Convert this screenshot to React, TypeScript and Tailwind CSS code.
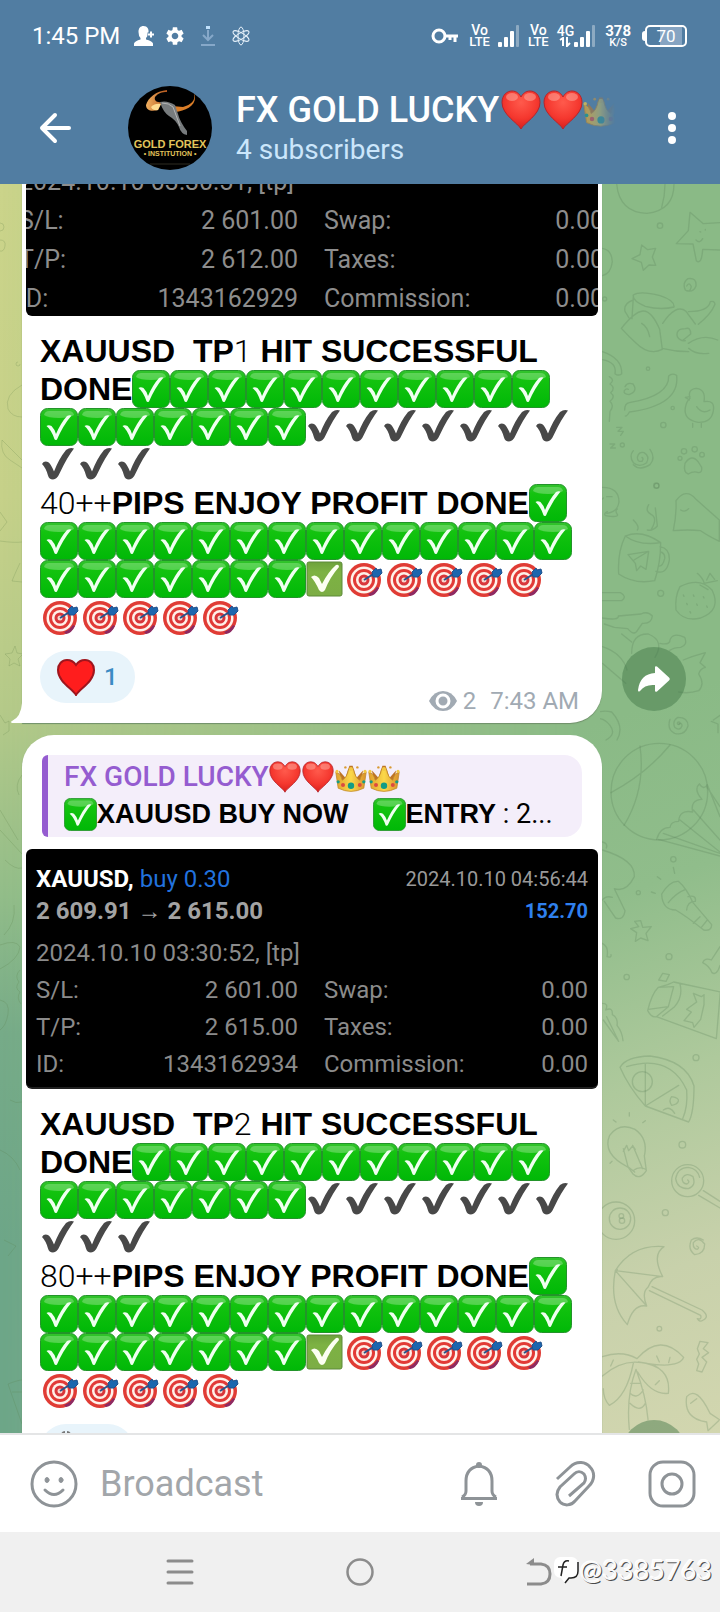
import { Fragment } from 'react';
import type { ReactNode } from 'react';
import { MdSettings } from 'react-icons/md';

const EmojiDefs = () => (
  <svg className="absolute h-0 w-0" aria-hidden="true">
    <defs>
      <linearGradient id="green" x1="0" y1="0" x2="0" y2="1">
        <stop offset="0" stopColor="#35c32f" />
        <stop offset="0.25" stopColor="#13c30f" />
        <stop offset="1" stopColor="#00b807" />
      </linearGradient>
      <linearGradient id="lime" x1="0" y1="0" x2="0" y2="1">
        <stop offset="0" stopColor="#6ea23c" />
        <stop offset="0.3" stopColor="#7db243" />
        <stop offset="1" stopColor="#7cad45" />
      </linearGradient>
      <radialGradient id="red" cx="0.5" cy="0.3" r="0.7">
        <stop offset="0" stopColor="#ff5a4c" />
        <stop offset="0.6" stopColor="#f5382f" />
        <stop offset="1" stopColor="#d81f1c" />
      </radialGradient>
      <linearGradient id="gold" x1="0" y1="0" x2="1" y2="0">
        <stop offset="0" stopColor="#e0a02c" />
        <stop offset="0.5" stopColor="#fbd84a" />
        <stop offset="1" stopColor="#d9902a" />
      </linearGradient>
      <linearGradient id="horn" x1="0" y1="0" x2="1" y2="0">
        <stop offset="0" stopColor="#f0b060" />
        <stop offset="1" stopColor="#b4561c" />
      </linearGradient>
      <symbol id="check" viewBox="0 0 38 38">
        <rect x="0.500" y="0.500" width="37" height="37" rx="7" fill="url(#green)" stroke="#23942a" />
        <path d="M4 7q1-4 5-4h20q4 0 5 4q-4 3-15 3T4 7z" fill="#8fe38a" opacity="0.5" />
        <path d="M6.500 18q2-1.500 5 0q3 3 4.500 8q5-11.500 11-18q2-1.300 4.500-0.500q-8.500 10-14.500 24q-1.500 1.200-2.500-0.200Q11.500 22 6.500 18z" fill="#effff0" />
      </symbol>
      <symbol id="tick" viewBox="0 0 38 38">
        <path d="M2 18q2-3.500 6-2q3 2 6 9.500q5-13 12-21.500q4-3 8-1.500q-7 9-14 24q-3 7-7 7t-5-4Q6 22 2 18z" fill="#484848" />
      </symbol>
      <symbol id="box" viewBox="0 0 38 38">
        <rect x="1" y="2" width="35" height="34" rx="2" fill="url(#lime)" stroke="#5d8a38" />
        <path d="M5 17q4-3.500 8 1l3 6Q22 12 30 5q3-1 3 2Q24 17 19 30q-3 4-6 0Q9 21 5 17z" fill="#fcfff2" />
      </symbol>
      <symbol id="target" viewBox="0 0 40 38">
        <circle cx="20" cy="20" r="17" fill="#e03c35" />
        <circle cx="20" cy="20" r="13.500" fill="#fff3ec" />
        <circle cx="20" cy="20" r="11" fill="#e23a36" />
        <circle cx="20" cy="20" r="8" fill="#fff0e8" />
        <circle cx="20" cy="20" r="5.500" fill="#d9363a" />
        <circle cx="20" cy="20" r="2.500" fill="#f6d5cd" />
        <path d="M24 34q6-2 9-7l2 1q-3 7-9 8z" fill="#8e2a62" />
        <path d="M20 20L31 13" stroke="#26558c" strokeWidth="2" />
        <path d="M28 12l4-4l1 2l4-1l1 4l-4 4l-5 0z" fill="#1c66ae" stroke="#20518c" />
      </symbol>
      <symbol id="heart" viewBox="0 0 40 40">
        <path d="M20 39C17 33 1 25 1 12.500C1 5 6 1 11 1c4.500 0 7.500 3 9 6c1.500-3 4.500-6 9-6c5 0 10 4 10 11.500C39 25 23 33 20 39z" fill="url(#red)" stroke="#b5252c" />
        <ellipse cx="11" cy="7" rx="6" ry="4" fill="#ffb0a4" opacity="0.5" />
        <ellipse cx="29" cy="7" rx="6" ry="4" fill="#ffb0a4" opacity="0.5" />
      </symbol>
      <symbol id="crown" viewBox="0 0 40 40">
        <path d="M8 32L5 12l8 9l5-15l4 0l5 15l8-9l-3 20z" fill="#bd7425" />
        <path d="M4 34L1 14q6 1 8 10q6-3 8-14h6q2 11 8 14q2-9 8-10l-3 20q-16 8-32 0z" fill="url(#gold)" stroke="#c28a2c" />
        <circle cx="2.500" cy="13" r="2" fill="#f3c843" />
        <circle cx="20" cy="10" r="2.500" fill="#f3c843" />
        <circle cx="37.500" cy="13" r="2" fill="#f3c843" />
        <circle cx="13" cy="8" r="1.500" fill="#d99a33" />
        <circle cx="28" cy="8" r="1.500" fill="#d99a33" />
        <circle cx="20" cy="31" r="4" fill="#149c86" />
        <circle cx="10" cy="30" r="2.500" fill="#dc4a40" />
        <circle cx="31" cy="30" r="2.500" fill="#dc4a40" />
        <circle cx="4" cy="26" r="2" fill="#149c86" />
        <circle cx="36" cy="26" r="2" fill="#149c86" />
      </symbol>
    </defs>
  </svg>
);

type EmojiProps = { name: string; label: string; className: string };

const Emoji = ({ name, label, className }: EmojiProps) => (
  <svg role="img" aria-label={label} className={`inline-block shrink-0 ${className}`}>
    <use href={`#${name}`} />
  </svg>
);

const repeat = (name: string, label: string, count: number) =>
  Array.from({ length: count }, (_, i) => (
    <Emoji
      key={`${name}-${i}`}
      name={name}
      label={label}
      className={name === 'target' ? 'h-[38px] w-10 align-top' : 'size-[38px] align-top'}
    />
  ));

const Bold = ({ children }: { children: ReactNode }) => (
  <b className="font-['Liberation_Sans',sans-serif] font-bold">{children}</b>
);

const Signal = () => (
  <svg viewBox="0 0 22 22" className="h-[22px] w-[22px]" fill="#fff" aria-hidden="true">
    <rect x="0" y="17" width="4" height="5" rx="1" />
    <rect x="6" y="12" width="4" height="10" rx="1" />
    <rect x="12" y="6" width="4" height="16" rx="1" />
    <rect x="18" y="0" width="3" height="22" rx="1" opacity="0.35" />
  </svg>
);

const VoLte = () => (
  <div className="flex flex-col items-center text-[14px] leading-[12px] font-medium">
    <span>Vo</span>
    <span className="text-[13px]">LTE</span>
  </div>
);

const StatusBar = () => (
  <div className="flex h-[72px] items-center pr-[33px] pl-8 text-white">
    <span className="text-2xl leading-8">1:45 PM</span>
    <svg viewBox="0 0 20 20" className="ml-[14px] size-5" fill="#fff" aria-hidden="true">
      <path d="M9.500 0c4 0 5.500 3 5 6.500Q14 10 12 12v1.500q6 1.500 7 4V20H0v-2.500q1-2.500 6.500-4V12Q4.500 10 4.500 6C4.500 2 6.500 0 9.500 0z" />
      <path d="M17 5v7M13.500 8.500h7" stroke="#517da2" strokeWidth="4" />
      <path d="M17 5.500v6M14 8.500h6" stroke="#fff" strokeWidth="2" />
    </svg>
    <MdSettings className="ml-[10px] size-[22px]" />
    <svg viewBox="0 0 16 20" className="ml-[14px] h-5 w-4" fill="none" stroke="#86a8c9" strokeWidth="2" aria-hidden="true">
      <path d="M8 4v9M3 9l5 5l5-5M1 19h14" />
      <path d="M8 0v3" stroke="#bfe0fb" strokeWidth="4" />
    </svg>
    <svg viewBox="0 0 18 20" className="ml-4 h-5 w-[18px]" fill="none" stroke="#e6f1fa" strokeWidth="1" aria-hidden="true">
      <ellipse cx="9" cy="10" rx="3" ry="9" />
      <ellipse cx="9" cy="10" rx="3" ry="9" transform="rotate(60 9 10)" />
      <ellipse cx="9" cy="10" rx="3" ry="9" transform="rotate(-60 9 10)" />
    </svg>
    <div className="ml-auto flex items-center">
      <svg viewBox="0 0 28 16" className="h-4 w-7" fill="none" stroke="#fff" strokeWidth="3" aria-hidden="true">
        <circle cx="8" cy="8" r="6" />
        <path d="M14 8h13M24 8v6M19 8v4" />
      </svg>
      <div className="ml-[10px]"><VoLte /></div>
      <div className="ml-2"><Signal /></div>
      <div className="ml-2"><VoLte /></div>
      <div className="ml-2 flex flex-col items-center text-[14px] leading-[12px] font-medium">
        <span>4G</span>
        <svg viewBox="0 0 12 10" className="h-[10px] w-3" fill="none" stroke="#fff" strokeWidth="2" aria-hidden="true">
          <path d="M1 3l3-2v8M8 0v9l3-3" />
        </svg>
      </div>
      <Signal />
      <div className="ml-[9px] flex flex-col items-center font-medium">
        <span className="text-[15px] leading-[12px] font-bold">378</span>
        <span className="text-[11px] leading-[11px]">K/S</span>
      </div>
      <div className="ml-[11px] flex items-center">
        <span className="h-[10px] w-[3px] rounded-l bg-white" />
        <span className="flex h-[22px] w-[42px] items-center justify-center rounded-[5px] border-2 border-white bg-[linear-gradient(to_right,transparent_35%,#86a4c2_35%,#86a4c2_92%,transparent_92%)] text-[17px] leading-[18px]">
          70
        </span>
      </div>
    </div>
  </div>
);

const Avatar = () => (
  <svg viewBox="0 0 84 84" className="size-[84px] shrink-0" role="img" aria-label="Gold Forex Institution">
    <circle cx="42" cy="42" r="42" fill="#000" />
    <path d="M39 4C28 5 20 12 18 19c0 5 5 7 12 5l4-8c-6 1-8-2-7-5c3-4 7-5 12-5z" fill="url(#horn)" />
    <path d="M66 8c2 6-3 11-11 13l-11-1l3 6c10-1 20-6 20-14c0-2-0-3-1-4z" fill="#d97d28" />
    <path d="M23 21q4-4 10-3l-3 6q-5 1-7-3z" fill="#ffdc91" />
    <path d="M32 16q7-2 15 3l3 9q2 8 9 17l0 4q-6-1-8-8q-3-7-10-11q-6-4-9-14z" fill="#777b7d" />
    <path d="M34 17q7 0 11 4l7 19" stroke="#b5b5b5" fill="none" />
    <text x="42" y="62" textAnchor="middle" className="fill-[#e3c65c] font-['Liberation_Sans',sans-serif] text-[11px] font-bold">GOLD FOREX</text>
    <text x="42" y="70" textAnchor="middle" className="fill-[#e3c65c] font-['Liberation_Sans',sans-serif] text-[7px] font-bold">• INSTITUTION •</text>
    <path d="M22 78h40" stroke="#2e2c22" />
  </svg>
);

const Header = () => (
  <header className="shrink-0 bg-[#517da2]">
    <StatusBar />
    <div className="flex h-28 items-center pr-9 pl-[38px]">
      <button type="button" aria-label="Back">
        <svg viewBox="0 0 34 32" className="h-8 w-[34px]" fill="none" stroke="#fff" strokeWidth="4" strokeLinecap="round" strokeLinejoin="round">
          <path d="M17 3L4 16l13 13M4 16h27" />
        </svg>
      </button>
      <div className="ml-14"><Avatar /></div>
      <div className="ml-6 min-w-0 flex-1">
        <h1 className="flex h-11 items-center text-4xl leading-[44px] font-medium whitespace-nowrap text-white">
          FX GOLD LUCKY
          <Emoji name="heart" label="❤️" className="ml-[2px] size-10" />
          <Emoji name="heart" label="❤️" className="ml-[2px] size-10" />
          <span className="flex [mask-image:linear-gradient(to_right,#000b,transparent_90%)]">
            <Emoji name="crown" label="👑" className="size-9" />
          </span>
        </h1>
        <p className="text-[28px] leading-9 text-[#cbe6fb]">4 subscribers</p>
      </div>
      <button type="button" aria-label="More options" className="w-6">
        <svg viewBox="0 0 24 32" className="h-8 w-6" fill="#fff">
          <circle cx="12" cy="4" r="4" />
          <circle cx="12" cy="16" r="4" />
          <circle cx="12" cy="28" r="4" />
        </svg>
      </button>
    </div>
  </header>
);

const Wallpaper = () => (
  <div className="absolute inset-0 bg-[linear-gradient(to_bottom,#cbd48a,#c6d189_25%,#b5ca89_42%,#92bd89_57%,#76ab88_68%,#6da688_85%)]" aria-hidden="true">
    <div className="absolute inset-0 bg-[linear-gradient(160deg,#8aba86_50%,#90bd8b_62%,#aec99c_75%,#c8d1ab_88%,#d2d6af)] [mask-image:linear-gradient(to_right,transparent,#000_80%)]" />
    <svg viewBox="0 184 24 1249" className="absolute top-0 left-0 h-[1249px] w-6" fill="none" stroke="#55773f" strokeOpacity="0.2" strokeWidth="1">
      <circle cx="0" cy="227" r="4" />
      <path d="M0 240q6 0 5 6t-5 5M18 362a2 2 0 1 0 2 2M22 385q-18 10-14 24q4 8 14 8M2 440l20 20M2 440q-2 14 8 20l12 8M0 512l7 10l-7 9M0 541q14 2 22 1M20 563q-4 8-8 18l10 1M15 646l2 7l6 1l-5 5l2 7l-6-3l-5 3l1-7l-5-5l7-1zM0 715l5 8l4-2l0 10l-6 4" />
      <path d="M22 775q-8 10-3 20M0 830l22 24M0 810l18 30M5 860q10 10 17 8M14 905q2 18-10 30M0 945q16-6 20 2q-1 12-20 22M0 1000q10 2 8 14t-8 16M20 970q-6 6-1 12q-5 6 1 10q-4 6 1 12M10 1100q6 4 12 2M0 1150q14 6 20 20M4 1240l12 6l-8 10M8 1384l14 40M8 1384q10-4 14-4M12 1392h10" />
    </svg>
    <svg viewBox="600 184 120 1249" className="absolute top-0 right-0 h-[1249px] w-[120px]" fill="none" stroke="#557b55" strokeOpacity="0.24" strokeWidth="1" strokeLinejoin="round" strokeLinecap="round">
      <g transform="translate(360 180) scale(0.333333)" strokeWidth="4">
        <path d="M770 12q8 85 90 88q82-8 82-88M915 12q0 35-10 70M990 97l40 34l50-3M990 97l-5 55l-36 39l50 1l10 50q16 14 19-34l52 2M1020 155l2 1M1036 148v2M1008 180q12 12 20-4" />
        <path d="M845 195l18 14l24-4l-10 26l10 25l-20-1l-17 16l-6-24l-28-11l24-12zM980 318q8-14 14 2q-4 20-18 10q-10-22 8-34q26-4 24 22q-8 20-28 14" />
        <circle cx="900" cy="137" r="8" /><circle cx="734" cy="357" r="6" /><circle cx="864" cy="566" r="5" /><circle cx="910" cy="735" r="8" /><circle cx="938" cy="684" r="5" /><circle cx="787" cy="795" r="6" /><circle cx="890" cy="917" r="7" />
        <path d="M727 205q28 4 30 40q-4 36-30 42M820 345q20-14 80 2q44 14 42 34q-40 10-86-2q-40-16-36-34zM820 350l-4 66M820 360q-30 10-25 34l12 20M784 445q40-50 65-52q26-1 50 55l8 60q-40 20-80-20q-20-18-43-43zM845 430q18 10 24 40M908 430q40-60 70-36l28 38M906 505q40 10 80 10M985 395q60 0 66-30q12-4 14 8q-12 30-50 60M985 490q44-30 88-10M986 505q20 20 60 15M970 480l22-18q0-22-16-16q-30 0-24 24q8 14 24 12" />
        <path d="M727 515q60 20 58 66q-10 8-20 0q6-34-38-42M748 590q18 10 2 22q18 12 2 26q16 12-2 26q14 14 0 30l-2 30M794 690q0-20 14-22q120-20 118-80q10-10 24-2q10 90-142 110q-8 14-12 12M795 620q6-14 24-8q16 22-12 32q-18-2-14-12q6-8 12-4" />
        <path d="M990 655q-8-28 20-30q28 4 22 40q34-6 28 28q-6 36-46 34q-44-8-38-44q4-20 14-28zM990 650l-14 2l12 8M998 730v12M1024 730v12M1010 680q16 24 40 10" />
        <path d="M846 832q6 4 0 12q-14 2-14-12q4-18 20-14q18 10 8 30q-22 16-40 0q-14-20 0-36M870 808q18 26 0 46q-30 20-50 0M975 850q20-30 40-4l10 16q2 16-10 16q-14-6-30 4q-16-4-10-32z" />
        <circle cx="972" cy="814" r="8" /><circle cx="1004" cy="808" r="8" /><circle cx="1026" cy="824" r="7" /><circle cx="960" cy="835" r="6" />
        <path d="M770 742l16 0l-12 12l16 0l-8 12M750 792h14l-12 12h14" />
      </g>
      <g transform="translate(360 480) scale(0.333333)" strokeWidth="4">
        <path d="M727 22q50 0 50 44q-4 30-36 34M740 50h16M742 95q-20 12 10 14q24 2 20-6q-8-10 0-16M940 152q10-50 8-90q30-40 60-4l70 62v64q-40-20-56-32q-36-4-82 0zM962 90q14 8 24-4" />
        <path d="M796 168q50-20 106 20q0 60-18 114q-60 12-108-20q-4-66 20-114zM796 168q40 30 106 20M900 200q30 6 28 40q-8 46-40 34M902 216q14 4 12 20q-6 24-18 22M804 224l62-10l-8 54l-16-10l-12 14l-4-22zM822 240l40-24M866 74q-12 20 8 30t0 44M886 84l6 54q-14 16-30 12M820 120q20 20 12 30M720 64l10-10" />
        <circle cx="902" cy="340" r="9" /><circle cx="889" cy="17" r="8" /><circle cx="956" cy="730" r="4" />
        <path d="M960 320q60-30 96 10q30 60-34 84q-50 12-74-24q-4-40 12-70zM1012 280q16 14 20 28M1032 310l40-8M1040 300l10-20l14 18M1020 315l24 14M970 345l2 4M1000 345l2 4M1030 350l2 4M980 370l2 4M1010 372l2 4M990 395l2 4M1040 378l2 4" />
        <path d="M727 338h54q22 12 4 24h-58M727 414q50 8 48-6l68-6q20-10 34 6q-2 24-30 22l-14 20q-10 20-30-4l-40-4l-30-10M815 520q0-60 50-58q50 20 20 70M900 490q30 6 30-10q8-24 44-8q10 24-12 30q-20 0-34 10M785 462l30 24M727 500q60 20 74 70M727 550l70 60M970 540l26-10l40-12l-16 30l16 14q-16 4-20 20q20 30 0 50q-30 10-60 4M665 742q34-60 90-46q40 44 16 84M700 716q30-6 50 20t-12 44" />
        <path d="M956 732q10-6 10 6q-6 16-22 4q-8-20 10-30q30 0 30 26q-10 30-40 22q-24-12-14-42M1060 720l20-14M1054 724l20 8l0 26" />
      </g>
      <g transform="translate(360 730) scale(0.333333)" strokeWidth="4">
        <circle cx="898" cy="185" r="145" />
        <path d="M930 45Q860 130 753 188M840 48q18 130-48 238M1018 162q14 20 24 2l38 96M1018 162q-18 16 8 46q-36 2-28 38q-40-8-42 28q-24 0-26 18q-30 0-40 36M895 328l185 50M910 310l170 60M960 270l120 96M1000 240l80 90M1040 170l40 60" />
        <path d="M727 360q100 30 96 80q-24 48-60 36l32 66q-4 30-28 22q-14-20-34-50M727 336q18 4 12 18M727 510q10-14 30-8M905 492q24-40 50-38q24 20 44 64l56 66q0 20-24 16q-50-40-84-60q-40 0-42-48zM925 518q24-30 52-40M984 500q26-6 22 14q-24 0-26 26M1020 560l-20 20M1042 570l-18 22M940 412l4 18M892 440l10 8M874 486l12 4M824 574l18-2l6 20l26-2l-16 20l6 22l-22-8l-16 10l4-26l-18-12l24-6z" />
        <circle cx="940" cy="388" r="8" /><circle cx="835" cy="488" r="6" /><circle cx="927" cy="680" r="9" /><circle cx="800" cy="741" r="8" /><circle cx="1008" cy="983" r="9" />
        <path d="M1080 650l-26 40q-20-8-26 8q20 10 28 30q14 10 24-22M727 640q20 10 14 40q14 4 12-6M908 730l20 4l-10 20l-22-4zM895 772q-20 20-32 70q12 22 26 18l180 66l12-140l-140-30l-18 8zM895 772l46-2l-16 60l-60 8M925 830l-36 30M960 762q10 40-18 70l-34 26M1000 790l24 10l8-6v30l-10 44l-20 24l-4-14l-26-6l22-26l-14-8l30-22z" />
        <path d="M727 820q20 0 10 20q22-10 20 14q18 10 14 32q16 20 18 46M740 860l34 70M730 870l46 64" />
      </g>
      <g transform="translate(560 1080) scale(0.333333)" strokeWidth="4">
        <path d="M180-38q18-32 90-34q110 14 132 90q0 80-16 108l-130-48q-50-56-76-116zM200-40q130-40 180 70q4 50-12 86M256 78V-50M256 78l100-62" />
        <circle cx="247" cy="5" r="30" /><path d="M335 50q24 4 20 14t-20 12q-10-14 0-26M310 90q20-14 34 10" />
        <path d="M205 262q-80-40-56-96q30-40 76-18q40 28 28 80l6 44q-20 30-40 10zM190 206l14 54l20 16M218 196l30 70M190 214l10-18l6 16l12-14l8 10M222 270q16-12 36-2M208 98v10M160 120l8 6M256 122l-8 6M150 250l6-6" />
        <circle cx="367" cy="194" r="10" /><circle cx="316" cy="398" r="9" /><circle cx="298" cy="746" r="7" />
        <circle cx="383" cy="302" r="48" />
        <path d="M383 300q8 6-2 12q-16-2-14-18q12-18 32-4q10 28-14 36q-34 0-38-30q6-34 38-34q28 4 34 30M430 332l50 32M416 346l64 38M410 498q10 4 2 10q-14-2-12-20q16-20 34 4q0 30-30 32q-22-16-10-44q16-12 36 0" />
        <circle cx="168" cy="422" r="56" /><circle cx="180" cy="416" r="32" />
        <circle cx="184" cy="408" r="7" /><circle cx="186" cy="422" r="8" />
        <path d="M166 572q50-80 146-72q-38 24-4 90q-30-4-44 32q-20 16-4 56q-40-8-58 56q-56-60-36-162zM166 572l142 18M166 572l94 106M166 572q10-4 4-2M276 620l150 70q24 20 4 30q-12 8-18-4q14 4 10-10l-154-74M420 784l24 4l-14 18l16 12l-20 14l14 14l-14 30l-16-4l6-20l-6-14l8-16l-6-16z" />
        <path d="M127 830q60-20 104 6q70-80 140-4q-14 36-126 16q-60-10-118 40M235 846q100 10 90 94q-50 6-92-64M220 850q-20 100-72 126q-18-20-18-50M228 868q-30 80-20 180M228 868q30 80 36 150M212 910h28M210 940q20 20 40-10M210 970q30 30 46 0M290 828l8 18M330 832l-4 16M160 840l-8 18M298 902l-12 12M380 950q30-34 70 50l30 20M380 950q-10 66 60 76l4 26l32-30M392 970l18-14" />
      </g>
    </svg>
  </div>
);

type TradeRow = [string, string, string, string];

type TradeRowsProps = { rows: TradeRow[]; rowClass: string; valueClass: string; label: string };

const TradeRows = ({ rows, rowClass, valueClass, label }: TradeRowsProps) => (
  <table className="w-full" aria-label={label}>
    <tbody>
      {rows.map((row) => (
        <tr key={row[0]} className={rowClass}>
          <td className="w-16 p-0">{row[0]}</td>
          <td className={`p-0 text-right ${valueClass}`}>{row[1]}</td>
          <td className="p-0 pl-[26px]">{row[2]}</td>
          <td className="p-0 text-right">{row[3]}</td>
        </tr>
      ))}
    </tbody>
  </table>
);

const Caption = ({ target, pips }: { target: string; pips: string }) => (
  <div className="mt-4 mr-5 ml-[18px] text-[32px] leading-[38px] font-light text-black">
    <p className="whitespace-pre-wrap">
      <Bold>{'XAUUSD  TP'}</Bold>{target}<Bold> HIT SUCCESSFUL DONE</Bold>
      {repeat('check', '✅', 18)}
      {repeat('tick', '✔️', 10)}
    </p>
    <p>
      {pips}++<Bold>PIPS ENJOY PROFIT DONE</Bold>
      {repeat('check', '✅', 22)}
      {repeat('box', '✅', 1)}
      {repeat('target', '🎯', 10)}
    </p>
  </div>
);

const MessageFooter = ({ time, children }: { time: string; children: ReactNode }) => (
  <div className="mt-[15px] flex h-[72px] items-start justify-between pr-[23px] pl-[18px]">
    {children}
    <div className="mt-[38px] flex h-6 items-center text-2xl leading-6 text-[#a1aab3]">
      <svg viewBox="0 0 28 20" className="mr-[6px] h-5 w-7" aria-hidden="true">
        <path d="M0 10Q5 0 14 0t14 10q-5 10-14 10T0 10z" fill="#a1aab3" />
        <circle cx="14" cy="10" r="6" fill="none" stroke="#fff" strokeWidth="3" />
      </svg>
      <span className="mr-[14px]">2</span>
      <time>{time}</time>
    </div>
  </div>
);

const Message = ({ className, children }: { className: string; children: ReactNode }) => (
  <article className="flex pl-[22px]">
    <div className={`relative min-w-0 flex-1 bg-white shadow-[0_1px_1px_#6f8f6a] ${className}`}>{children}</div>
    <div className="flex w-[118px] shrink-0 items-end pb-3 pl-5">
      <button type="button" aria-label="Share" className="flex size-16 items-center justify-center rounded-full bg-[#3f7344]/45">
        <svg viewBox="0 0 32 27" className="h-[27px] w-8" fill="#fff">
          <path d="M17 1.500q0-2 2-1l12 11q1.500 1.500 0 3L19 25.500q-2 1-2-1V19Q7 18 2 25q-2 1.500-2-1Q2 8 17 7z" />
        </svg>
      </button>
    </div>
  </article>
);

const Chat = () => (
  <main className="relative min-h-0 flex-1 overflow-hidden">
    <Wallpaper />
    <div className="relative flex flex-col gap-3">
      <Message className="rounded-br-[32px]">
        <svg viewBox="0 0 12 30" className="absolute bottom-0 -left-[11px] h-[30px] w-3" fill="#fff" aria-hidden="true">
          <path d="M12 0v30H1q-2-1 0-2Q10 24 11 10V0z" />
        </svg>
        <div className="mx-1 flex h-[132px] flex-col justify-end overflow-hidden rounded-b-md bg-black text-[25px] leading-[39px] text-[#8d8d8d]">
          <div className="-mr-[6px] -mb-[2px] -ml-[7px]">
            <p>2024.10.10 03:30:51, [tp]</p>
            <TradeRows
              label="Trade details, TP1"
              rowClass="h-[39px]"
              valueClass="w-[215px]"
              rows={[
                ['S/L:', '2 601.00', 'Swap:', '0.00'],
                ['T/P:', '2 612.00', 'Taxes:', '0.00'],
                ['ID:', '1343162929', 'Commission:', '0.00'],
              ]}
            />
          </div>
        </div>
        <Caption target="1" pips="40" />
        <MessageFooter time="7:43 AM">
          <button type="button" className="flex h-[52px] items-center rounded-full bg-[#e8f4fb] pr-[17px] pl-4 text-2xl font-medium text-[#3b8bc4]">
            <svg viewBox="0 0 40 38" className="mr-2 h-[38px] w-10" role="img" aria-label="❤️">
              <path d="M20 37C17 31 2 24 2 12C2 6 6 2 11 2c4 0 7 2 9 5c2-3 5-5 9-5c5 0 9 4 9 10C38 24 23 31 20 37z" fill="#ff1d1d" stroke="#9f151d" strokeWidth="2" />
            </svg>
            1
          </button>
        </MessageFooter>
      </Message>

      <Message className="rounded-[32px]">
        <div className="px-5 pt-5">
          <blockquote className="h-[82px] overflow-hidden rounded-l-md rounded-r-[18px] border-l-[6px] border-[#955cd0] bg-[#f4eefa] pl-4">
            <div className="flex h-11 items-center text-[28px] font-medium text-[#955cd0]">
              FX GOLD LUCKY
              <Emoji name="heart" label="❤️" className="size-8" />
              <Emoji name="heart" label="❤️" className="ml-[1px] size-8" />
              <Emoji name="crown" label="👑" className="ml-[1px] size-8" />
              <Emoji name="crown" label="👑" className="ml-[1px] size-8" />
            </div>
            <p className="flex h-[30px] items-center text-[27px] leading-[30px] whitespace-pre text-black">
              <Emoji name="check" label="✅" className="size-[33px]" />
              <Bold>XAUUSD BUY NOW</Bold>
              <Emoji name="check" label="✅" className="ml-6 size-[33px]" />
              <Bold>ENTRY</Bold> : 2...
            </p>
          </blockquote>
        </div>
        <div className="mx-1 mt-3 h-60 overflow-hidden rounded-md border-b-2 border-[#202020] bg-black px-[10px] pt-[14px] text-[#8b8b8b]">
          <div className="flex items-center justify-between text-2xl leading-8">
            <span><strong className="text-white">XAUUSD,</strong> <span className="text-[#2272dd]">buy 0.30</span></span>
            <span className="text-[20px] text-[#999]">2024.10.10 04:56:44</span>
          </div>
          <div className="flex items-center justify-between text-2xl leading-8 font-bold text-[#a3a3a3]">
            <span>2 609.91 → 2 615.00</span>
            <span className="text-[20px] text-[#2f80ee]">152.70</span>
          </div>
          <p className="mt-2 text-2xl leading-9">2024.10.10 03:30:52, [tp]</p>
          <div className="text-2xl leading-9">
            <TradeRows
              label="Trade details, TP2"
              rowClass="h-[37px]"
              valueClass="w-[198px]"
              rows={[
                ['S/L:', '2 601.00', 'Swap:', '0.00'],
                ['T/P:', '2 615.00', 'Taxes:', '0.00'],
                ['ID:', '1343162934', 'Commission:', '0.00'],
              ]}
            />
          </div>
        </div>
        <Caption target="2" pips="80" />
        <MessageFooter time="7:43 AM">
          <button type="button" aria-label="Reaction" className="flex h-[52px] w-[94px] items-start rounded-full bg-[#e8f4fb] pt-[6px] pl-5">
            <svg viewBox="0 0 12 4" className="h-1 w-3" fill="#777" aria-hidden="true">
              <path d="M1 4q1-3 4-3l0 3zM7 4V1q3 0 4 3z" />
            </svg>
          </button>
        </MessageFooter>
      </Message>
    </div>
  </main>
);

const Composer = () => (
  <form className="flex h-[99px] shrink-0 items-center border-t-2 border-[#e4e5e6] bg-white pr-6 pl-[30px]">
    <button type="button" aria-label="Emoji">
      <svg viewBox="0 0 48 48" className="size-12" fill="none" stroke="#8e9397" strokeWidth="3" strokeLinecap="round">
        <circle cx="24" cy="24" r="22" />
        <path d="M15 30q9 9 18 0" />
        <ellipse cx="17" cy="20" rx="2" ry="2.500" fill="#8e9397" strokeWidth="1" />
        <ellipse cx="31" cy="20" rx="2" ry="2.500" fill="#8e9397" strokeWidth="1" />
      </svg>
    </button>
    <input
      type="text"
      aria-label="Broadcast"
      placeholder="Broadcast"
      className="ml-[22px] min-w-0 flex-1 text-4xl leading-[44px] text-black outline-none placeholder:text-[#a2a6aa]"
    />
    <button type="button" aria-label="Notifications">
      <svg viewBox="0 0 40 48" className="h-12 w-10" fill="none" stroke="#8e9397" strokeWidth="3">
        <path d="M2 38.500h36M3 37q4-2 4-6V21q0-13 13-15q13 2 13 15v10q0 4 4 6" />
        <circle cx="20" cy="5" r="2" fill="#8e9397" strokeWidth="2" />
        <path d="M16 42h8q0 4-4 4t-4-4z" fill="#8e9397" stroke="none" />
      </svg>
    </button>
    <button type="button" aria-label="Attach" className="ml-[55px]">
      <svg viewBox="0 0 44 48" className="h-12 w-11" fill="none" stroke="#8e9397" strokeWidth="3" strokeLinecap="butt">
        <path d="M3 19L16 7c7-7 16-5 20 0c5 5 5 13-1 19L21 41c-4 5-11 5-15 1c-4-5-4-10 0-15L20 14c3-3 7-3 10 0c2 3 2 6 0 9L15 36" />
      </svg>
    </button>
    <button type="button" aria-label="Record video" className="ml-[50px]">
      <svg viewBox="0 0 48 48" className="size-12" fill="none" stroke="#8e9397" strokeWidth="3">
        <rect x="2" y="2" width="44" height="44" rx="13" />
        <circle cx="24" cy="24" r="10" />
      </svg>
    </button>
  </form>
);

const NavBar = () => (
  <nav className="relative flex h-20 shrink-0 items-center justify-center gap-[152px] bg-[#f0f0f0]">
    <button type="button" aria-label="Recent apps">
      <svg viewBox="0 0 28 28" className="size-7" stroke="#8c8c8c" strokeWidth="3" strokeLinecap="round">
        <path d="M2 3h24M2 14h24M2 25h24" />
      </svg>
    </button>
    <button type="button" aria-label="Home">
      <svg viewBox="0 0 28 28" className="size-7" fill="none" stroke="#8c8c8c" strokeWidth="2.500">
        <circle cx="14" cy="14" r="12.500" />
      </svg>
    </button>
    <button type="button" aria-label="Back">
      <svg viewBox="0 0 28 28" className="size-7" fill="none" stroke="#8c8c8c" strokeWidth="3">
        <path d="M1 26h14q9-1 9-10t-9-10H4" />
        <path d="M0 6l8-6v7z" fill="#8c8c8c" stroke="none" />
      </svg>
    </button>
    <div className="absolute top-5 right-2 flex items-center font-['Lato',sans-serif] text-[27px] leading-9 text-[#fafafa] [text-shadow:1px_1px_0_#4a4a4a,-1px_-1px_0_#fff]">
      <svg viewBox="0 0 28 32" className="h-8 w-7" fill="none" aria-hidden="true">
        <path d="M8 3h12q6 1 6 7v7q0 7-7 7h-2l-4 5l-4-5Q2 23 2 17V10q0-6 6-7z" fill="#fff" />
        <path d="M26 8v9q0 7-7 7h-2l-4 5M17 7q-5-1-6 4l-2 11M6 13h9" stroke="#222" strokeWidth="1.500" />
      </svg>
      <span>@3385763</span>
    </div>
  </nav>
);

const App = () => (
  <Fragment>
    <EmojiDefs />
    <div className="flex h-screen flex-col overflow-hidden bg-white font-['Roboto',sans-serif]">
      <Header />
      <Chat />
      <Composer />
      <NavBar />
    </div>
  </Fragment>
);

export default App;
